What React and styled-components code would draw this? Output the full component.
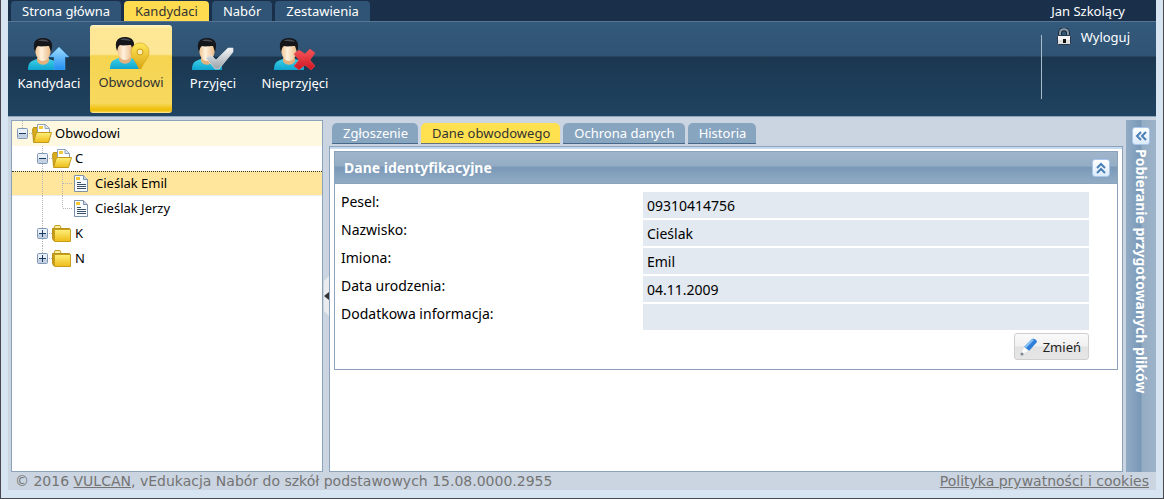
import React from "react";
import styled, { createGlobalStyle, css } from "styled-components";

const topTabs = ["Strona główna", "Kandydaci", "Nabór", "Zestawienia"];

const ribbonItems = [
  { label: "Kandydaci", badge: "arrow" },
  { label: "Obwodowi", badge: "pin" },
  { label: "Przyjęci", badge: "tick" },
  { label: "Nieprzyjęci", badge: "cross" },
];

const treeRows = [
  { label: "Obwodowi", slots: ["root-minus"], icon: "open", tone: "root" },
  { label: "C", slots: ["", "minus"], icon: "open" },
  { label: "Cieślak Emil", slots: ["", "line", "tee"], icon: "file", tone: "selected" },
  { label: "Cieślak Jerzy", slots: ["", "line", "end"], icon: "file" },
  { label: "K", slots: ["", "plus"], icon: "closed" },
  { label: "N", slots: ["", "plus-last"], icon: "closed" },
];

const detailTabs = ["Zgłoszenie", "Dane obwodowego", "Ochrona danych", "Historia"];

const fields = [
  { id: "pesel", label: "Pesel:", value: "09310414756" },
  { id: "nazwisko", label: "Nazwisko:", value: "Cieślak" },
  { id: "imiona", label: "Imiona:", value: "Emil" },
  { id: "data", label: "Data urodzenia:", value: "04.11.2009" },
  { id: "info", label: "Dodatkowa informacja:", value: "" },
];

const badgeColors = {
  arrow: ["#9fdcff", "#1e8df0"],
  pin: ["#ffe75a", "#d9a411"],
  tick: ["#f4f5f6", "#9aa3aa"],
  cross: ["#f5575c", "#cf1420"],
};

const PersonIcon = ({ badge }) => (
  <svg width="42" height="32" viewBox="0 0 42 32" aria-hidden="true">
    <defs>
      <linearGradient id={`shirt-${badge}`} x1="0" y1="0" x2="0" y2="1">
        <stop offset="0" stopColor="#3fcfe6" />
        <stop offset="1" stopColor="#0da4d0" />
      </linearGradient>
      <linearGradient id={`face-${badge}`} x1="0" y1="0" x2="1" y2="0">
        <stop offset="0" stopColor="#eec08c" />
        <stop offset="0.4" stopColor="#fff1dc" />
        <stop offset="1" stopColor="#e9b884" />
      </linearGradient>
      <linearGradient id={`badge-${badge}`} x1="0" y1="0" x2="0" y2="1">
        <stop offset="0" stopColor={badgeColors[badge][0]} />
        <stop offset="1" stopColor={badgeColors[badge][1]} />
      </linearGradient>
    </defs>
    <path d="M0 32c0-8 3-9 9-11h12c7 2 9 4 9 11z" fill={`url(#shirt-${badge})`} />
    <path d="M9 20h12v3c-2 5-10 5-12 0z" fill="#e3b17e" />
    <path d="M7 10c0-4 3-6 8-6s8 2 8 6c0 7-3 13-8 13S7 17 7 10z" fill={`url(#face-${badge})`} />
    <path d="M7 14C4 5 7 0 15 0c8 0 11 5 8 14l-2-6c-3 0-8 1-11 0-2 1-2 3-3 6z" fill="#15161a" />
    <path d="M10 3c3-2 8-2 11 1-3-1-8-1-11-1z" fill="#4b4e55" />
    {badge === "arrow" && (
      <path d="M31 9l10 10h-4v13H26V19h-5z" fill="url(#badge-arrow)" stroke="#53aef5" strokeWidth="0.5" />
    )}
    {badge === "pin" && (
      <>
        <path
          d="M30 6c5 0 9 4 9 9 0 6-5 9-8 17h-2c-3-8-8-11-8-17 0-5 4-9 9-9z"
          fill="url(#badge-pin)"
          stroke="#d59d12"
          strokeWidth="0.6"
        />
        <circle cx="30" cy="15" r="3" fill="#fbeeb0" stroke="#d09a14" />
      </>
    )}
    {badge === "tick" && (
      <path d="M14 20l5-3 5 5 12-12h5v4L27 31h-4z" fill="url(#badge-tick)" stroke="#e3e6e8" strokeWidth="0.6" />
    )}
    {badge === "cross" && (
      <path
        d="M20 16l5-4 6 4 5-5 5 4-5 7 5 6-4 4-6-5-6 5-5-4 5-6z"
        fill="url(#badge-cross)"
        stroke="#e8484d"
        strokeWidth="0.6"
      />
    )}
  </svg>
);

const LockIcon = () => (
  <svg width="16" height="18" viewBox="0 0 16 18" aria-hidden="true">
    <path d="M4 9V5c0-5 8-5 8 0v4" fill="none" stroke="#16283a" strokeWidth="4" />
    <path d="M4 9V5c0-5 8-5 8 0v4" fill="none" stroke="#8b99a5" strokeWidth="2" />
    <rect x="1.500" y="7.500" width="13" height="9" rx="1" fill="#f4f4f4" stroke="#26394a" />
    <path d="M2 12h12v4H2z" fill="#dedede" />
    <rect x="7" y="11" width="3" height="4" fill="#111" />
  </svg>
);

const FolderIcon = ({ open }) => (
  <svg width="20" height="20" viewBox="0 0 20 20" aria-hidden="true">
    <defs>
      <linearGradient id={open ? "folder-open" : "folder-closed"} x1="0" y1="0" x2="0" y2="1">
        <stop offset="0" stopColor="#fff07c" />
        <stop offset="1" stopColor="#edbb16" />
      </linearGradient>
    </defs>
    {open ? (
      <>
        <path d="M.500 5.500l1-2h4l1 2v12h-5z" fill="#d9aa1a" stroke="#b8921c" />
        <path d="M5.500.500h8l4 4v8h-12z" fill="#fff" stroke="#8fa2b5" />
        <path d="M13 .500v4h4" fill="#dce7f1" stroke="#8fa2b5" />
        <path d="M7 2h4v3H7z" fill="#f4c93c" />
        <path d="M4.500 8.500h15l-3 10h-15z" fill="url(#folder-open)" stroke="#c09a1e" />
      </>
    ) : (
      <>
        <path d="M2 4l1-2.500h5L9 4" fill="#fff0a0" stroke="#c79e24" />
        <path d="M.500 4.500h17v12h-16l-1-2z" fill="#c99a14" stroke="#b8921c" />
        <path d="M2.500 5.500h16v12h-16z" fill="url(#folder-closed)" stroke="#c79e1c" />
      </>
    )}
  </svg>
);

const FileIcon = () => (
  <svg width="20" height="20" viewBox="0 0 20 20" aria-hidden="true">
    <path d="M2.500 1.500h9l4 4v12h-13z" fill="#f8fbff" stroke="#7d92a9" />
    <path d="M11.500 1.500v4h4" fill="#c9d7e5" stroke="#7d92a9" />
    <path d="M4 3h4v3H4z" fill="#f7c92f" />
    <path d="M5 8.500h4M5 10.500h9M5 12.500h9M5 14.500h9" stroke="#3a5067" />
  </svg>
);

const PencilIcon = () => (
  <svg width="18" height="18" viewBox="0 0 18 18" aria-hidden="true">
    <path d="M4 9l8-8c2-1 5 1 5 3l-8 9z" fill="#2f7fd8" />
    <path d="M4 9l8-8 2 1-8 8z" fill="#85c0f6" />
    <path d="M4 9l5 4-6 3-2-1z" fill="#fdfdfd" stroke="#dadada" strokeWidth="0.5" />
    <circle cx="2" cy="16" r="1.500" fill="#7d858d" />
  </svg>
);

const Chevrons = ({ up }) => (
  <svg width="12" height="12" viewBox="0 0 12 12" aria-hidden="true">
    <path
      d={up ? "M2 6l4-4 4 4M2 11l4-4 4 4" : "M6 2L2 6l4 4M11 2L7 6l4 4"}
      fill="none"
      stroke="#4a7fb5"
      strokeWidth="2"
    />
  </svg>
);

const TreeSlot = ({ kind }) => {
  const box = kind.includes("minus") || kind.includes("plus");
  const top = kind !== "";
  const bottom = ["line", "tee", "plus", "minus"].includes(kind);
  return (
    <Slot viewBox="0 0 20 25" aria-hidden="true">
      {top && <path d="M10.500 0v12" />}
      {bottom && <path d="M10.500 12v13" />}
      {top && kind !== "line" && <path d="M11 12.500h9" />}
      {box && (
        <>
          <rect x="5.500" y="7.500" width="10" height="10" rx="1" className="box" />
          <path d="M6 13h9v4H6z" className="shade" />
          <path d="M7 12.500h7" className="sign" />
          {kind.includes("plus") && <path d="M10.500 9v7" className="sign" />}
        </>
      )}
    </Slot>
  );
};

const App = () => {
  return (
    <Frame>
      <GlobalStyle />
      <Header>
        <TopBar>
          <TopNav>
            {topTabs.map((tab) => (
              <TopTab key={tab} $active={tab === "Kandydaci"}>
                {tab}
              </TopTab>
            ))}
          </TopNav>
          <UserName>Jan Szkolący</UserName>
        </TopBar>
        <Ribbon>
          <RibbonGroup>
            {ribbonItems.map((item) => (
              <RibbonButton key={item.label} $active={item.badge === "pin"}>
                <PersonIcon badge={item.badge} />
                {item.label}
              </RibbonButton>
            ))}
          </RibbonGroup>
          <Session>
            <LogoutButton>
              <LockIcon />
              Wyloguj
            </LogoutButton>
          </Session>
        </Ribbon>
      </Header>

      <Workspace>
        <TreePanel>
          {treeRows.map((row) => (
            <TreeRow key={row.label} $tone={row.tone}>
              {row.slots.map((kind, i) => (
                <TreeSlot key={i} kind={kind} />
              ))}
              {row.icon === "file" ? <FileIcon /> : <FolderIcon open={row.icon === "open"} />}
              <TreeLabel>{row.label}</TreeLabel>
            </TreeRow>
          ))}
        </TreePanel>

        <Splitter aria-label="Zwiń panel">
          <svg width="6" height="40" viewBox="0 0 6 40" aria-hidden="true">
            <path d="M6 0v40L1 35V5z" fill="#e9ebee" />
            <path d="M6 16v8l-5-4z" fill="#333" />
          </svg>
        </Splitter>

        <Details>
          <DetailTabs>
            {detailTabs.map((tab) => (
              <DetailTab key={tab} $active={tab === "Dane obwodowego"}>
                {tab}
              </DetailTab>
            ))}
          </DetailTabs>
          <DetailBody>
            <Card>
              <CardHeader>
                <CardTitle>Dane identyfikacyjne</CardTitle>
                <ToolButton aria-label="Zwiń sekcję">
                  <Chevrons up />
                </ToolButton>
              </CardHeader>
              <Form>
                {fields.map((field) => (
                  <FieldRow key={field.id}>
                    <FieldLabel htmlFor={field.id}>{field.label}</FieldLabel>
                    <FieldValue id={field.id} value={field.value} readOnly />
                  </FieldRow>
                ))}
                <Actions>
                  <EditButton type="button">
                    <PencilIcon />
                    Zmień
                  </EditButton>
                </Actions>
              </Form>
            </Card>
          </DetailBody>
        </Details>

        <SidePanel>
          <ToolButton aria-label="Rozwiń panel">
            <Chevrons />
          </ToolButton>
          <SideTitle>Pobieranie przygotowanych plików</SideTitle>
        </SidePanel>
      </Workspace>

      <Footer>
        <span>
          © 2016 <FooterLink href="#vulcan">VULCAN</FooterLink>, vEdukacja Nabór do szkół
          podstawowych 15.08.0000.2955
        </span>
        <FooterLink href="#cookies">Polityka prywatności i cookies</FooterLink>
      </Footer>
    </Frame>
  );
};

const GlobalStyle = createGlobalStyle`
  * {
    box-sizing: border-box;
  }

  body {
    margin: 0;
    background-color: #d7e4f1;
    font-family: "Noto Sans", sans-serif;
    font-size: 13px;
    line-height: 20px;
    color: #000;
  }

  button,
  input {
    font: inherit;
    border: none;
    margin: 0;
    padding: 0;
  }

  button {
    cursor: pointer;
  }
`;

const Frame = styled.div`
  display: flex;
  flex-direction: column;
  min-height: 100vh;
  padding: 0 7px 8px;
  border: 1px solid #4a4a4e;
  border-top: none;
`;

const Header = styled.header`
  border-bottom: 1px solid #8ba5bd;
`;

const TopBar = styled.div`
  display: flex;
  justify-content: space-between;
  height: 21px;
  padding: 1px 31px 0 3px;
  background-color: #1a304a;
`;

const TopNav = styled.nav`
  display: flex;
  gap: 3px;
`;

const TopTab = styled.button`
  padding: 0 11px;
  border-radius: 4px 4px 0 0;
  background-color: ${(props) => (props.$active ? "#ffdb4f" : "#305475")};
  color: ${(props) => (props.$active ? "#333" : "#fff")};
`;

const UserName = styled.span`
  color: #fff;
`;

const Ribbon = styled.div`
  display: flex;
  justify-content: space-between;
  height: 95px;
  padding-top: 3px;
  border-top: 1px solid #58768f;
  background: linear-gradient(#33597c, #2f5373 34px, #1b3750 35px, #1f4361);
`;

const RibbonGroup = styled.div`
  display: flex;
`;

const RibbonButton = styled.button`
  display: flex;
  flex-direction: column;
  align-items: center;
  gap: 3px;
  width: 82px;
  height: 88px;
  padding-top: 13px;
  border-radius: 3px;
  background: none;
  color: #fff;
  white-space: nowrap;

  ${(props) =>
    props.$active &&
    css`
      padding-top: 12px;
      background: linear-gradient(
        #fff3c4,
        #fee794 4px,
        #fce797 29px,
        #f5d450 31px,
        #f7d95e 78px,
        #f0c010 84px,
        #f0c010 86px,
        #fff0a8
      );
      color: #333;
    `}
`;

const Session = styled.div`
  height: 64px;
  margin-top: 10px;
  padding-right: 26px;
  border-left: 1px solid #a9bac8;
`;

const LogoutButton = styled.button`
  display: flex;
  align-items: center;
  gap: 9px;
  height: 20px;
  margin-top: -8px;
  padding-left: 14px;
  background: none;
  color: #fff;
`;

const Workspace = styled.main`
  display: flex;
  flex: 1;
  padding: 3px 0 0 3px;
  background-color: #cbd4e1;
`;

const TreePanel = styled.section`
  flex: none;
  width: 312px;
  border: 1px solid #8ca3bb;
  background-color: #fff;
`;

const TreeRow = styled.div`
  display: flex;
  align-items: center;
  height: 25px;

  ${(props) =>
    props.$tone === "root" &&
    css`
      background-color: #fff8e1;
    `}

  ${(props) =>
    props.$tone === "selected" &&
    css`
      background-color: #ffe69c;
      border-top: 1px dotted #333;
      border-bottom: 1px solid #ededed;
    `}
`;

const Slot = styled.svg`
  flex: none;
  width: 20px;
  height: 25px;
  fill: none;
  stroke: #b5b5b5;
  stroke-dasharray: 1 1;

  .box {
    fill: #eaf0f7;
    stroke: #8098b5;
    stroke-dasharray: none;
  }

  .shade {
    fill: #c3d1e2;
    stroke: none;
  }

  .sign {
    stroke: #1d3a60;
    stroke-dasharray: none;
  }
`;

const TreeLabel = styled.span`
  padding: 0 0 2px 3px;
`;

const Splitter = styled.button`
  display: flex;
  flex: none;
  align-items: center;
  justify-content: flex-end;
  width: 6px;
  background: none;
`;

const Details = styled.section`
  display: flex;
  flex: 1;
  flex-direction: column;
`;

const DetailTabs = styled.div`
  display: flex;
  gap: 3px;
  padding: 3px 3px 2px;
`;

const DetailTab = styled.button`
  height: 21px;
  padding: 0 10px 0 11px;
  border-bottom: 1px solid ${(props) => (props.$active ? "#64707c" : "#47688a")};
  border-radius: 5px 5px 0 0;
  background-color: ${(props) => (props.$active ? "#ffe14f" : "#88a5c0")};
  color: ${(props) => (props.$active ? "#333" : "#fff")};
  line-height: 18px;
`;

const DetailBody = styled.div`
  flex: 1;
  padding: 4px;
  border: 1px solid #8ca3bb;
  background: linear-gradient(#c5daee 2px, #fff 2px);
`;

const Card = styled.article`
  border: 1px solid #8ca3bb;
`;

const CardHeader = styled.header`
  display: flex;
  align-items: center;
  justify-content: space-between;
  height: 32px;
  padding: 0 7px 0 9px;
  border-bottom: 1px solid #8ba5bd;
  background: linear-gradient(#a0b5cb, #94adc4 14px, #7998b7 15px, #91abc4);
`;

const CardTitle = styled.h2`
  margin: 0;
  color: #fff;
  font-size: 14px;
`;

const ToolButton = styled.button`
  display: grid;
  flex: none;
  place-items: center;
  width: 18px;
  height: 18px;
  border: 1px solid #a9c7ec;
  border-radius: 3px;
  background: linear-gradient(#fff, #dcebfa);
`;

const Form = styled.form`
  padding: 8px 28px 9px 6px;
`;

const FieldRow = styled.div`
  display: flex;
  margin-bottom: 2px;
  font-size: 14px;
`;

const FieldLabel = styled.label`
  flex: none;
  width: 302px;
`;

const FieldValue = styled.input`
  flex: 1;
  min-width: 0;
  height: 26px;
  padding: 0 4px;
  background-color: #e2e9f0;
`;

const Actions = styled.div`
  display: flex;
  justify-content: flex-end;
  padding-top: 1px;
`;

const EditButton = styled.button`
  display: flex;
  align-items: center;
  gap: 5px;
  height: 27px;
  padding: 0 7px 0 5px;
  border: 1px solid #cfcfcf;
  border-radius: 3px;
  background: linear-gradient(#fafafa, #f0f0f0 12px, #e2e2e2 13px, #e6e6e6);
  color: #222;
`;

const SidePanel = styled.aside`
  display: flex;
  flex: none;
  flex-direction: column;
  align-items: center;
  gap: 4px;
  width: 30px;
  margin-left: 3px;
  padding-top: 7px;
  background: linear-gradient(to right, #91abc4, #7998b7 15px, #94adc4 16px, #9db3c9);
`;

const SideTitle = styled.h2`
  margin: 0;
  color: #fff;
  font-size: 14px;
  writing-mode: vertical-rl;
`;

const Footer = styled.footer`
  display: flex;
  justify-content: space-between;
  height: 18px;
  padding: 0 7px;
  background-color: #cbd4e1;
  color: #747474;
  font-family: "DejaVu Sans", sans-serif;
  font-size: 14px;
  line-height: 18px;
`;

const FooterLink = styled.a`
  color: inherit;
`;

export default App;
